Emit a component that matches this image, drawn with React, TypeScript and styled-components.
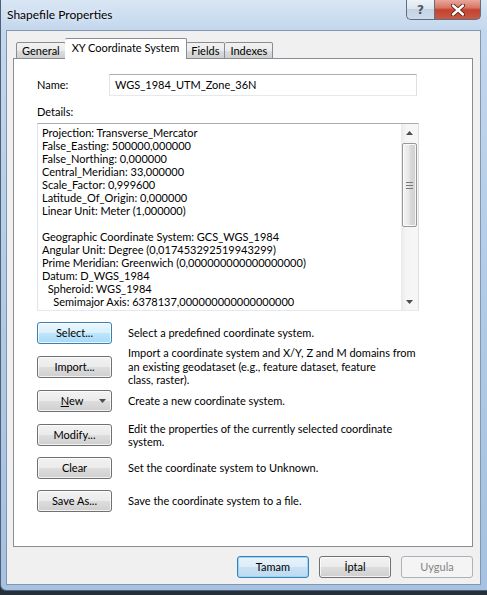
import styled, { createGlobalStyle, css } from "styled-components";

const GlobalStyle = createGlobalStyle`
  html, body {
    margin: 0;
    padding: 0;
    background: #26303b;
  }
  body {
    font-family: Lato, "Noto Sans", sans-serif;
    font-size: 11px;
    color: #000;
  }
  * {
    box-sizing: border-box;
  }
`;

const Window = styled.div`
  width: 487px;
  height: 591px;
  display: flex;
  flex-direction: column;
  background: linear-gradient(180deg, #d9e6f4 0px, #c3d7ed 30px, #aec8e5 60%, #a6c1e1 100%);
  border-left: 1px solid #4e6076;
  border-bottom: 1px solid #4e6076;
  border-radius: 0 0 0 6px;
`;

const TitleBar = styled.div`
  height: 30px;
  display: flex;
  align-items: flex-start;
  padding-left: 6px;
`;

const Title = styled.div`
  padding-top: 7px;
  line-height: 16px;
  font-size: 12px;
  color: #000;
  text-shadow: 0 0 6px rgba(255, 255, 255, 0.9);
`;

const CaptionGroup = styled.div`
  margin-left: auto;
  margin-right: 6px;
  display: flex;
  height: 20px;
`;

const CaptionButton = styled.div<{ $kind: "help" | "close" }>`
  height: 20px;
  display: flex;
  align-items: center;
  justify-content: center;
  border: 1px solid #5f6f83;
  border-top: none;
  ${(p) =>
    p.$kind === "help"
      ? css`
          width: 28px;
          border-right: none;
          border-radius: 0 0 0 5px;
          background: linear-gradient(180deg, #eef3f9 0%, #dbe5f0 45%, #c4d2e2 50%, #cfdcea 100%);
          color: #4a5666;
          font-family: "DejaVu Sans", sans-serif;
          font-weight: bold;
          font-size: 12px;
        `
      : css`
          width: 47px;
          border-radius: 0 0 5px 0;
          background: linear-gradient(180deg, #e8a89c 0%, #d77766 40%, #c4432f 52%, #c85a44 100%);
        `}
`;

const Client = styled.div`
  flex: 1;
  margin: 0 6px 5px 5px;
  border: 1px solid #8296ad;
  background: #f0f0f0;
  display: flex;
  flex-direction: column;
  padding: 7px 7px 6px 6px;
`;

const TabStrip = styled.div`
  display: flex;
  align-items: flex-end;
  height: 21px;
  margin-bottom: -1px;
  padding-left: 3px;
  position: relative;
  z-index: 1;
`;

const Tab = styled.div<{ $active?: boolean }>`
  border: 1px solid #898c95;
  border-radius: 2px 2px 0 0;
  line-height: 15px;
  padding: 0 5px;
  ${(p) =>
    p.$active
      ? css`
          height: 21px;
          background: #fff;
          border-bottom: none;
          padding: 1px 7px 0 7px;
          margin: 0 -1px;
          position: relative;
        `
      : css`
          height: 17px;
          background: linear-gradient(180deg, #f2f2f2 0%, #ebebeb 50%, #dddddd 51%, #cfcfcf 100%);
          & + & {
            border-left: none;
          }
        `}
`;

const Panel = styled.div`
  flex: 1;
  background: #fff;
  border: 1px solid #898c95;
  padding: 15px 0 0 23px;
  display: flex;
  flex-direction: column;
`;

const NameRow = styled.div`
  display: flex;
  align-items: center;
`;

const Label = styled.div`
  line-height: 16px;
  width: 72px;
`;

const TextBox = styled.div`
  width: 308px;
  height: 22px;
  border: 1px solid #abadb3;
  border-left-color: #e2e3ea;
  border-right-color: #dbdfe6;
  border-bottom-color: #e3e9ef;
  padding: 0 5px;
  line-height: 20px;
`;

const DetailsLabel = styled(Label)`
  margin-top: 8px;
`;

const DetailsBox = styled.div`
  margin-top: 3px;
  width: 382px;
  height: 188px;
  display: flex;
  border: 1px solid #abadb3;
  border-left-color: #e2e3ea;
  border-right-color: #dbdfe6;
  border-bottom-color: #e3e9ef;
`;

const DetailsText = styled.div`
  flex: 1;
  overflow: hidden;
  padding: 2px 4px;
  white-space: pre;
  line-height: 13px;
`;

const ScrollBar = styled.div`
  width: 17px;
  display: flex;
  flex-direction: column;
  background: linear-gradient(90deg, #eaeaea 0%, #f5f5f5 30%, #f7f7f7 100%);
`;

const ScrollArrow = styled.div`
  height: 17px;
  display: flex;
  align-items: center;
  justify-content: center;
`;

const ScrollTrack = styled.div`
  flex: 1;
`;

const ScrollThumb = styled.div`
  margin: 2px 1px 0 1px;
  height: 84px;
  border: 1px solid #979797;
  border-radius: 2px;
  background: linear-gradient(90deg, #f3f3f3 0%, #e8e8e8 45%, #d9d9d9 55%, #cfcfcf 100%);
  box-shadow: inset 0 0 0 1px rgba(255, 255, 255, 0.8);
  display: flex;
  align-items: center;
  justify-content: center;
`;

const Actions = styled.div`
  margin-top: 6px;
  display: grid;
  grid-template-columns: 75px 1fr;
  grid-template-rows: 32px 35px 33px 36px 30px 35px;
  column-gap: 16px;
  align-items: center;
`;

const Description = styled.div`
  line-height: 13.5px;
  white-space: nowrap;
`;

const Button = styled.div<{ $variant?: "hot" | "default" | "disabled" }>`
  height: 22px;
  border: 1px solid #707070;
  border-radius: 3px;
  background: linear-gradient(180deg, #f2f2f2 0%, #ebebeb 50%, #dddddd 51%, #cfcfcf 100%);
  box-shadow: inset 0 0 0 1px rgba(255, 255, 255, 0.75);
  text-align: center;
  line-height: 20px;
  color: #000;
  ${(p) =>
    p.$variant === "hot" &&
    css`
      border-color: #3c7fb1;
      background: linear-gradient(180deg, #eaf6fd 0%, #d9f0fc 50%, #bee6fd 51%, #a7d9f5 100%);
    `}
  ${(p) =>
    p.$variant === "default" &&
    css`
      border-color: #3c7fb1;
      background: linear-gradient(180deg, #e8f3fb 0%, #dcecf8 50%, #c9e2f4 51%, #bcdaf1 100%);
      box-shadow: inset 0 0 0 1px #9ad6f7;
    `}
  ${(p) =>
    p.$variant === "disabled" &&
    css`
      border-color: #adb2b5;
      background: #f4f4f4;
      box-shadow: none;
      color: #838383;
    `}
`;

const SplitButton = styled(Button)`
  display: grid;
  grid-template-columns: 1fr auto 1fr;
  align-items: center;
  padding-right: 5px;
`;

const DropArrow = styled.span`
  justify-self: end;
  display: flex;
`;

const Footer = styled.div`
  margin-top: 9px;
  display: flex;
  justify-content: flex-end;
  gap: 10px;
`;

const FooterButton = styled(Button)`
  width: 72px;
`;

const Underline = styled.span`
  text-decoration: underline;
`;

const details = [
  "Projection: Transverse_Mercator",
  "False_Easting: 500000,000000",
  "False_Northing: 0,000000",
  "Central_Meridian: 33,000000",
  "Scale_Factor: 0,999600",
  "Latitude_Of_Origin: 0,000000",
  "Linear Unit: Meter (1,000000)",
  "",
  "Geographic Coordinate System: GCS_WGS_1984",
  "Angular Unit: Degree (0,017453292519943299)",
  "Prime Meridian: Greenwich (0,000000000000000000)",
  "Datum: D_WGS_1984",
  "  Spheroid: WGS_1984",
  "    Semimajor Axis: 6378137,000000000000000000",
];

const Arrow = ({ up }: { up?: boolean }) => (
  <svg width="7" height="4" viewBox="0 0 7 4">
    <path d={up ? "M0 4 L3.5 0 L7 4 Z" : "M0 0 L3.5 4 L7 0 Z"} fill="#4d4d4d" />
  </svg>
);

const Grip = () => (
  <svg width="7" height="7" viewBox="0 0 7 7">
    <path d="M0 0.5H7M0 3.5H7M0 6.5H7" stroke="#7a7a7a" strokeWidth="1" />
  </svg>
);

const CloseGlyph = () => (
  <svg width="14" height="12" viewBox="0 0 14 12">
    <path d="M2 1.5 L12 10.5 M12 1.5 L2 10.5" stroke="#5a1d14" strokeWidth="4.2" strokeLinecap="round" />
    <path d="M2 1.5 L12 10.5 M12 1.5 L2 10.5" stroke="#ffffff" strokeWidth="2.4" strokeLinecap="round" />
  </svg>
);

export default function App() {
  return (
    <>
      <GlobalStyle />
      <Window>
        <TitleBar>
          <Title>Shapefile Properties</Title>
          <CaptionGroup>
            <CaptionButton $kind="help">?</CaptionButton>
            <CaptionButton $kind="close">
              <CloseGlyph />
            </CaptionButton>
          </CaptionGroup>
        </TitleBar>
        <Client>
          <TabStrip>
            <Tab>General</Tab>
            <Tab $active>XY Coordinate System</Tab>
            <Tab>Fields</Tab>
            <Tab>Indexes</Tab>
          </TabStrip>
          <Panel>
            <NameRow>
              <Label>Name:</Label>
              <TextBox>WGS_1984_UTM_Zone_36N</TextBox>
            </NameRow>
            <DetailsLabel>Details:</DetailsLabel>
            <DetailsBox>
              <DetailsText>{details.join("\n")}</DetailsText>
              <ScrollBar>
                <ScrollArrow>
                  <Arrow up />
                </ScrollArrow>
                <ScrollTrack>
                  <ScrollThumb>
                    <Grip />
                  </ScrollThumb>
                </ScrollTrack>
                <ScrollArrow>
                  <Arrow />
                </ScrollArrow>
              </ScrollBar>
            </DetailsBox>
            <Actions>
              <Button $variant="hot">Select...</Button>
              <Description>Select a predefined coordinate system.</Description>
              <Button>Import...</Button>
              <Description>
                Import a coordinate system and X/Y, Z and M domains from
                <br />
                an existing geodataset (e.g., feature dataset, feature
                <br />
                class, raster).
              </Description>
              <SplitButton>
                <span />
                <span>
                  <Underline>N</Underline>ew
                </span>
                <DropArrow>
                  <Arrow />
                </DropArrow>
              </SplitButton>
              <Description>Create a new coordinate system.</Description>
              <Button>Modify...</Button>
              <Description>
                Edit the properties of the currently selected coordinate
                <br />
                system.
              </Description>
              <Button>Clear</Button>
              <Description>Set the coordinate system to Unknown.</Description>
              <Button>Save As...</Button>
              <Description>Save the coordinate system to a file.</Description>
            </Actions>
          </Panel>
          <Footer>
            <FooterButton $variant="default">Tamam</FooterButton>
            <FooterButton>İptal</FooterButton>
            <FooterButton $variant="disabled">Uygula</FooterButton>
          </Footer>
        </Client>
      </Window>
    </>
  );
}
